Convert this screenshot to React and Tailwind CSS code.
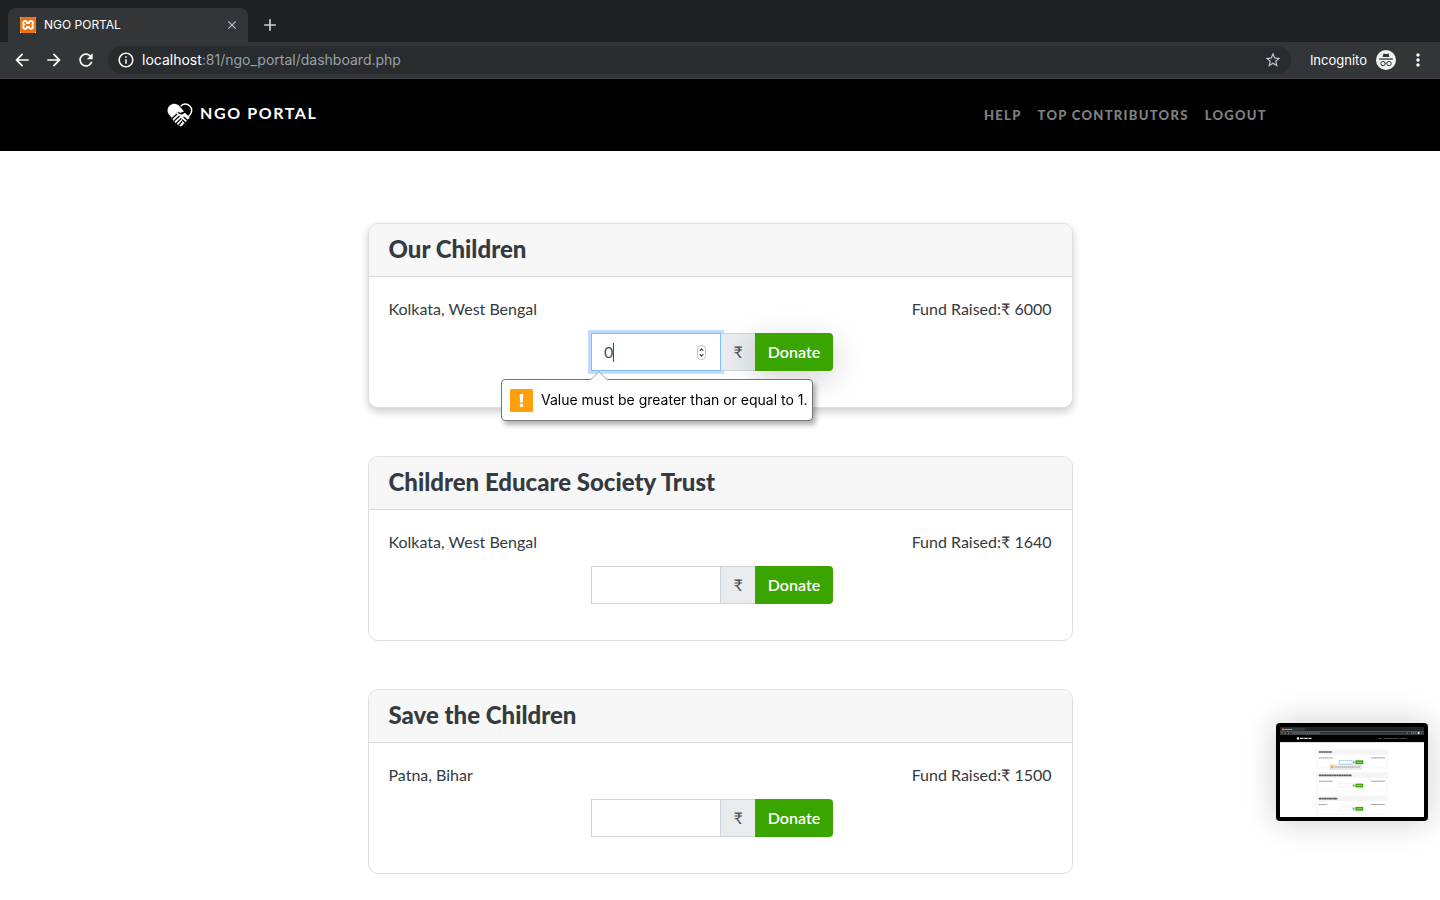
import { useEffect, useRef } from "react";
import { SiXampp } from "react-icons/si";
import { MdArrowBack, MdArrowForward, MdRefresh, MdInfoOutline, MdStarBorder, MdMoreVert, MdAdd, MdClose } from "react-icons/md";

const ngos = [
  { id: "our", name: "Our Children", place: "Kolkata, West Bengal", raised: "6000", value: "0", active: true },
  { id: "educare", name: "Children Educare Society Trust", place: "Kolkata, West Bengal", raised: "1640", value: "" },
  { id: "save", name: "Save the Children", place: "Patna, Bihar", raised: "1500", value: "" },
];

function IncognitoIcon() {
  return (
    <svg viewBox="0 0 20 20" className="size-5" aria-hidden="true">
      <circle cx="10" cy="10" r="10" fill="#f1f3f4" />
      <path d="M7.4 3.8 Q8 3.3 8.7 3.7 Q10 4.2 11.3 3.7 Q12 3.3 12.6 3.8 L13.4 7 H6.6Z" fill="#323639" />
      <rect x="3.2" y="8.4" width="13.6" height="1.3" fill="#323639" />
      <g fill="none" stroke="#323639" strokeWidth="1">
        <circle cx="7" cy="13.6" r="2.2" />
        <circle cx="13" cy="13.6" r="2.2" />
        <path d="M9.2 13.3 Q10 12.7 10.8 13.3" />
      </g>
    </svg>
  );
}

function HeartHands() {
  return (
    <svg viewBox="0 0 26 24" className="h-6 w-[26px]" aria-hidden="true">
      <path d="M12.6 3.6 C10.2 .2 6 -.1 3 2.3 C0 5 -.1 8.5 1.8 11.4 L4.6 14.4 L10 9.6 L13 10.2 L17 8.2 L15.4 6.4 Z" fill="#fff" />
      <path d="M13.6 3.4 C16 .4 19.8 .3 22.6 2.8 C25.4 5.4 25.4 9.3 22.6 12.2 L21 13.9" fill="none" stroke="#fff" strokeWidth="1.5" />
      <path d="M10 9.4 L13.2 11 L17.6 9.4 L22.6 14.2 Q22.8 15.8 21 16.2 Q21 18.2 19 18.4 Q18.8 20.4 16.8 20.4 Q16.4 22.6 13.6 23.4 Q11.4 22.8 10.2 21.2 Q8.2 21 8 19 Q5.8 18.6 6 16.6 Q4 16 4.6 14.2Z" fill="#fff" />
      <g stroke="#000" strokeWidth="1.3" strokeLinecap="round" fill="none">
        <path d="M5.2 15.4 L9.6 11.4" />
        <path d="M7.2 17.9 L12.2 13.2" />
        <path d="M9.4 20.2 L14 15.6" />
        <path d="M11.8 22.2 L14.8 18.8" />
        <path d="M17 14.2 L20.6 17.4 M15.4 17 L18.4 19.8" />
        <path d="M11.8 9.8 C13.6 11.3 15.6 10.8 17.4 9.2 L18.4 7.8" />
      </g>
    </svg>
  );
}

function Browser() {
  return (
    <header className="bg-[#202124] font-[Inter,'Noto_Sans',sans-serif] text-white">
      <div className="flex h-[42px] items-end pl-2">
        <div className="flex h-[34px] w-60 items-center rounded-t-lg bg-[#323639] pl-3 pr-[9px]">
          <SiXampp className="size-4 bg-white text-[#f3700f]" aria-hidden="true" />
          <span className="ml-2 grow text-xs">NGO PORTAL</span>
          <button aria-label="Close tab" className="text-[#bdc1c6]"><MdClose className="size-[14px]" /></button>
        </div>
        <button aria-label="New tab" className="mb-[7px] ml-3 text-[#d0d3d6]"><MdAdd className="size-5" /></button>
      </div>
      <div className="flex h-[37px] items-center border-b border-[#3f4346] bg-[#323639] px-3">
        <button aria-label="Back" className="mr-3"><MdArrowBack className="size-5" /></button>
        <button aria-label="Forward" className="mr-3"><MdArrowForward className="size-5" /></button>
        <button aria-label="Reload" className="mr-3"><MdRefresh className="size-5" /></button>
        <div className="flex h-7 grow items-center rounded-full bg-[#282c2f] px-[9px]">
          <MdInfoOutline className="size-[18px]" aria-hidden="true" />
          <span className="ml-[7px] grow text-sm text-[#9aa0a6]"><span className="text-white">localhost</span>:81/ngo_portal/dashboard.php</span>
          <button aria-label="Bookmark" className="text-[#c4c7ca]"><MdStarBorder className="size-[18px]" /></button>
        </div>
        <span className="ml-[19px] mr-[9px] text-[13px] leading-6">Incognito</span>
        <IncognitoIcon />
        <button aria-label="Menu" className="ml-3"><MdMoreVert className="size-5" /></button>
      </div>
    </header>
  );
}

function Warning() {
  return (
    <div role="alert" className="absolute -left-[90px] top-[46px] z-10 flex h-[42px] items-center whitespace-nowrap rounded border border-[#777] bg-white pl-2 pr-1 font-[Inter,'Noto_Sans',sans-serif] text-sm text-black shadow-[3px_4px_5px_rgba(0,0,0,0.3)]">
      <svg viewBox="0 0 18 9" className="absolute -top-[9px] left-[88px] h-[9px] w-[18px]" aria-hidden="true">
        <path d="M0 9 L9 .6 L18 9Z" fill="#fff" />
        <path d="M0 8.5 L1 8.5 L9 .6 L17 8.5 L18 8.5" fill="none" stroke="#999" />
      </svg>
      <svg viewBox="0 0 23 23" className="mr-2 size-[23px]" aria-hidden="true">
        <rect width="23" height="23" rx="1.5" fill="#ff9f0a" />
        <path d="M9.7 5 H13.3 L12.8 13.4 H10.2Z" fill="#fff" />
        <circle cx="11.5" cy="16.4" r="1.8" fill="#fff" />
      </svg>
      Value must be greater than or equal to 1.
    </div>
  );
}

function Card({ ngo }) {
  const input = useRef(null);
  useEffect(() => {
    if (ngo.active) input.current.focus();
  }, [ngo.active]);
  return (
    <article className={ngo.active ? "rounded-[10px] border border-[#dfdfdf] bg-white shadow-[0_4px_8px_rgba(0,0,0,0.2)]" : "rounded-[10px] border border-[#dfdfdf] bg-white"}>
      <h2 className="rounded-t-[9px] border-b border-[#d9d9d9] bg-[#f7f7f7] px-5 pb-[11px] pt-[9px] text-2xl font-black leading-8">{ngo.name}</h2>
      <div className="px-5 pb-9 pt-5">
        <div className="flex justify-between text-base leading-6">
          <span>{ngo.place}</span>
          <span>Fund Raised:₹ {ngo.raised}</span>
        </div>
        <form className="mr-4 mt-3 flex justify-center" onSubmit={(e) => e.preventDefault()}>
          <div className="relative flex h-[38px]">
            <input
              ref={input}
              id={ngo.id}
              type="text"
              inputMode="numeric"
              defaultValue={ngo.value}
              className="w-[130px] border border-[#ced4da] bg-white px-3 text-base text-[#495057] outline-none focus:border-[#80bdff] focus:shadow-[0_0_0_3px_#bfdbff]"
            />
            {ngo.active && (
              <>
                <span className="absolute left-[22px] top-[10px] h-[19px] w-px bg-[#495057]" />
                <svg viewBox="0 0 9 15" className="absolute left-[106px] top-[12px] h-[15px] w-[9px]" aria-hidden="true">
                  <rect x=".5" y=".5" width="8" height="14" rx="3.5" fill="#fff" stroke="#c4c4c4" />
                  <path d="M2.7 5.8 L4.5 3.8 L6.3 5.8 M2.7 9.2 L4.5 11.2 L6.3 9.2" fill="none" stroke="#444" strokeWidth="1.1" />
                </svg>
                <Warning />
              </>
            )}
            <label htmlFor={ngo.id} className="flex w-[34px] items-center justify-center border-y border-[#ced4da] bg-[#e9ecef] text-base text-[#495057]">₹</label>
            <button className={ngo.active ? "w-[78px] rounded-r bg-[#3aa500] text-base font-semibold text-white shadow-[0_8px_32px_rgba(0,0,0,0.18)]" : "w-[78px] rounded-r bg-[#3aa500] text-base font-semibold text-white"}>Donate</button>
          </div>
        </form>
      </div>
    </article>
  );
}

function Thumbnail() {
  return (
    <div className="fixed bottom-[79px] right-3 rounded border-4 border-black bg-white shadow-[0_0_32px_rgba(0,0,0,0.2)]">
      <svg viewBox="0 0 1440 900" className="h-[90px] w-36" role="img" aria-label="Screenshot preview">
        <rect width="1440" height="42" fill="#202124" />
        <rect x="8" y="8" width="240" height="34" fill="#323639" />
        <rect x="20" y="16" width="18" height="18" fill="#fb7a24" />
        <rect x="44" y="20" width="76" height="9" fill="#aaa" />
        <rect y="42" width="1440" height="37" fill="#323639" />
        <path d="M14 60 H30 M46 60 H62 M80 60 H94 M118 60 H400 M1265 60 H1280 M1310 60 H1366 M1414 60 H1422" stroke="#90959a" strokeWidth="9" strokeDasharray="14 5" />
        <circle cx="1386" cy="60" r="11" fill="#f1f3f4" />
        <rect y="79" width="1440" height="72" fill="#000" />
        <circle cx="180" cy="114" r="12" fill="#fff" />
        <path d="M200 114 H315" stroke="#ddd" strokeWidth="12" strokeDasharray="36 6" />
        <path d="M982 115 H1020 M1036 115 H1188 M1204 115 H1266" stroke="#666" strokeWidth="9" strokeDasharray="14 4" />
        {ngos.map((ngo, i) => {
          const y = 223 + i * 233;
          return (
            <g key={ngo.id}>
              <rect x="368" y={y} width="705" height="185" rx="10" fill="#fff" stroke="#eee" strokeWidth="4" />
              <rect x="368" y={y} width="705" height="54" fill="#f5f5f5" />
              <path d={`M388 ${y + 27} h${ngo.name.length * 11}`} stroke="#555b61" strokeWidth="17" strokeDasharray="23 2" />
              <path d={`M388 ${y + 86} h${ngo.place.length * 7} M912 ${y + 86} h140`} stroke="#999" strokeWidth="10" strokeDasharray="17 2" />
              <rect x="591" y={y + 110} width="130" height="38" fill="#fff" stroke={ngo.active ? "#80bdff" : "#eee"} strokeWidth="6" />
              <rect x="721" y={y + 110} width="34" height="38" fill="#dde1e5" />
              <path d={`M734 ${y + 129} h9`} stroke="#555" strokeWidth="14" />
              <rect x="755" y={y + 110} width="78" height="38" fill="#3aa500" />
              <rect x="768" y={y + 125} width="52" height="9" fill="#a9d898" />
            </g>
          );
        })}
        <rect x="501" y="380" width="310" height="40" fill="#fff" stroke="#999" strokeWidth="4" />
        <rect x="510" y="388" width="24" height="24" fill="#ff9f0a" />
        <path d="M542 400 H802" stroke="#888" strokeWidth="10" strokeDasharray="17 2" />
      </svg>
    </div>
  );
}

export default function App() {
  return (
    <div className="min-h-screen bg-white font-[Lato,'Noto_Sans',sans-serif] text-[#343a40]">
      <Browser />
      <nav className="h-[72px] bg-black">
        <div className="mx-auto flex h-full max-w-[1106px] items-center justify-between pr-1.5">
          <a href="#home" className="flex gap-[7px] text-base font-bold leading-5 tracking-widest text-white">
            <HeartHands />
            NGO PORTAL
          </a>
          <div className="flex gap-4 pt-0.5 text-[13px] font-black tracking-widest text-[#808080]">
            <a href="#help">HELP</a>
            <a href="#contributors">TOP CONTRIBUTORS</a>
            <a href="#logout">LOGOUT</a>
          </div>
        </div>
      </nav>
      <main className="mx-auto flex max-w-[705px] flex-col gap-12 pt-[72px]">
        {ngos.map((ngo) => (
          <Card key={ngo.id} ngo={ngo} />
        ))}
      </main>
      <Thumbnail />
    </div>
  );
}
